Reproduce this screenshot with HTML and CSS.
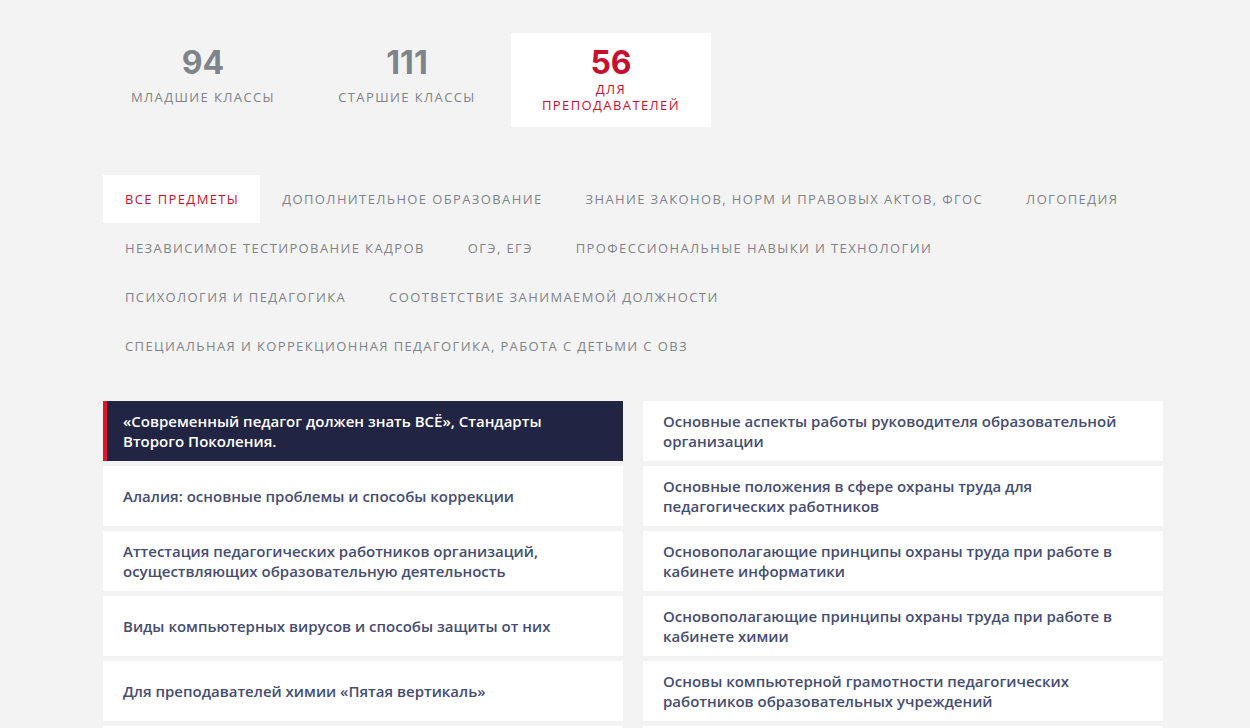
FILE: index.html
```html
<!DOCTYPE html>
<html lang="ru">
<head>
<meta charset="utf-8">
<title>Курсы</title>
<link rel="stylesheet" href="styles.css">
</head>
<body>
<div class="wrap">
  <div class="stats">
    <div class="stat">
      <div class="stat-num">94</div>
      <div class="stat-label">Младшие классы</div>
    </div>
    <div class="stat">
      <div class="stat-num">111</div>
      <div class="stat-label">Старшие классы</div>
    </div>
    <div class="stat stat-active">
      <div class="stat-num">56</div>
      <div class="stat-label">Для преподавателей</div>
    </div>
  </div>

  <div class="tabs">
    <div class="tab tab-active">Все предметы</div>
    <div class="tab">Дополнительное образование</div>
    <div class="tab">Знание законов, норм и правовых актов, ФГОС</div>
    <div class="tab">Логопедия</div>
    <div class="tab">Независимое тестирование кадров</div>
    <div class="tab">ОГЭ, ЕГЭ</div>
    <div class="tab">Профессиональные навыки и технологии</div>
    <div class="tab">Психология и педагогика</div>
    <div class="tab">Соответствие занимаемой должности</div>
    <div class="tab">Специальная и коррекционная педагогика, работа с детьми с ОВЗ</div>
  </div>

  <div class="cards">
    <div class="col">
      <div class="card card-active">«Современный педагог должен знать ВСЁ», Стандарты Второго Поколения.</div>
      <div class="card">Алалия: основные проблемы и способы коррекции</div>
      <div class="card">Аттестация педагогических работников организаций, осуществляющих образовательную деятельность</div>
      <div class="card">Виды компьютерных вирусов и способы защиты от них</div>
      <div class="card">Для преподавателей химии «Пятая вертикаль»</div>
      <div class="card"></div>
    </div>
    <div class="col">
      <div class="card">Основные аспекты работы руководителя образовательной организации</div>
      <div class="card">Основные положения в сфере охраны труда для педагогических работников</div>
      <div class="card">Основополагающие принципы охраны труда при работе в кабинете информатики</div>
      <div class="card">Основополагающие принципы охраны труда при работе в кабинете химии</div>
      <div class="card">Основы компьютерной грамотности педагогических работников образовательных учреждений</div>
      <div class="card"></div>
    </div>
  </div>
</div>
</body>
</html>
```

FILE: styles.css
```css
html, body {
  margin: 0;
  padding: 0;
  background: #f3f3f3;
  font-family: "Open Sans", "Liberation Sans", sans-serif;
  overflow: hidden;
  height: 728px;
}

.wrap {
  width: 1060px;
  margin-left: 103px;
  padding-top: 33px;
}

.stats {
  display: flex;
  gap: 4px;
}

.stat {
  width: 200px;
  height: 94px;
  box-sizing: border-box;
  padding: 10px 26px 0;
  display: flex;
  flex-direction: column;
  align-items: center;
  color: #7f838a;
}

.stat-active {
  background: #fff;
  color: #c8102e;
}

.stat-num {
  font-family: Inter, "Open Sans", sans-serif;
  font-size: 32px;
  font-weight: 700;
  line-height: 40px;
}

.stat-label {
  height: 31px;
  margin-top: -2px;
  display: flex;
  align-items: center;
  text-align: center;
  font-size: 13px;
  line-height: 16px;
  text-transform: uppercase;
  letter-spacing: 1.4px;
}

.tabs {
  display: flex;
  flex-wrap: wrap;
  row-gap: 1px;
  margin-top: 48px;
}

.tab {
  height: 48px;
  padding: 0 21px 0 22px;
  display: flex;
  align-items: center;
  font-size: 13px;
  text-transform: uppercase;
  letter-spacing: 1.38px;
  color: #7f838a;
  white-space: nowrap;
}

.tab-active {
  background: #fff;
  color: #c8102e;
}

.cards {
  display: flex;
  gap: 20px;
  margin-top: 31px;
}

.col {
  width: 520px;
  display: flex;
  flex-direction: column;
  gap: 5px;
}

.card {
  height: 60px;
  box-sizing: border-box;
  padding: 0 20px;
  display: flex;
  align-items: center;
  background: #fff;
  color: #464d6e;
  font-size: 15px;
  font-weight: 600;
  line-height: 20px;
}

.card-active {
  background: #222443;
  color: #fff;
  border-left: 4px solid #e8112d;
  padding-left: 16px;
}
```
